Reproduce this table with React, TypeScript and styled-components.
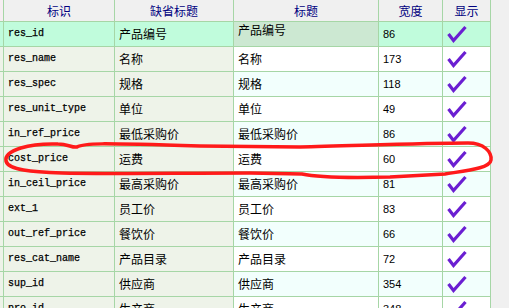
import React from "react";
import styled, { createGlobalStyle } from "styled-components";

const Global = createGlobalStyle`
  html, body { margin: 0; padding: 0; background: #f0f0f0; }
  body { width: 509px; height: 308px; overflow: hidden; }
`;

type Tone = "key" | "plain" | "alt" | "sel" | "edit" | "head" | "lead";

const bg: Record<Tone, string> = {
  key: "#eef3e9",
  plain: "#ffffff",
  alt: "#f2fffd",
  sel: "#c0fcdc",
  edit: "#cce8d2",
  head: "#f0f0f0",
  lead: "#f6eef2",
};

const Page = styled.div`
  position: relative;
  width: 509px;
  height: 308px;
  overflow: hidden;
`;

const Grid = styled.div`
  display: grid;
  grid-template-columns: 3px 110px 118px 144px 63px 47px;
  grid-template-rows: 21px;
  grid-auto-rows: 24px;
  gap: 1px;
  width: 490px;
  padding-right: 1px;
  background: #a6d6a6;
`;

const Cell = styled.div<{ $tone: Tone; $kind?: "mono" | "cjk" | "num" }>`
  background: ${(p) => bg[p.$tone]};
  display: flex;
  align-items: ${(p) => (p.$tone === "edit" ? "flex-start" : "center")};
  padding-left: 4px;
  overflow: hidden;
  white-space: nowrap;
  color: #000;
  font-family: ${(p) =>
    p.$kind === "mono"
      ? '"Liberation Mono", "DejaVu Sans Mono", monospace'
      : p.$kind === "num"
      ? '"Liberation Sans", Arial, sans-serif'
      : '"Noto Sans CJK SC", "Liberation Sans", sans-serif'};
  font-size: ${(p) => (p.$kind === "mono" ? "10px" : p.$kind === "num" ? "11px" : "12px")};
  font-weight: 400;
  -webkit-text-stroke: ${(p) => (p.$kind === "mono" ? "0.25px #000" : "0")};
  line-height: 16px;
`;

const Lead = styled.div<{ $tone: Tone }>`
  background: ${(p) => bg[p.$tone]};
`;

const Head = styled.div`
  background: #f0f0f0;
  color: #000080;
  display: flex;
  align-items: center;
  justify-content: center;
  font-family: "Noto Sans CJK SC", "Liberation Sans", sans-serif;
  font-size: 12px;
  line-height: 16px;
`;

const Check = () => (
  <svg width="20" height="18" viewBox="0 0 20 18">
    <path d="M1.5 9 L6.5 15.5 L18.5 2" fill="none" stroke="#6a1fd2" strokeWidth="3.2" strokeLinejoin="miter" />
  </svg>
);

const Annotation = styled.svg`
  position: absolute;
  left: 0;
  top: 0;
  pointer-events: none;
`;

const rows: [string, string, string][] = [
  ["res_id", "产品编号", "86"],
  ["res_name", "名称", "173"],
  ["res_spec", "规格", "118"],
  ["res_unit_type", "单位", "49"],
  ["in_ref_price", "最低采购价", "86"],
  ["cost_price", "运费", "60"],
  ["in_ceil_price", "最高采购价", "81"],
  ["ext_1", "员工价", "83"],
  ["out_ref_price", "餐饮价", "66"],
  ["res_cat_name", "产品目录", "72"],
  ["sup_id", "供应商", "354"],
  ["pro_id", "生产商", "348"],
];

export default function App() {
  return (
    <Page>
      <Global />
      <Grid>
        <Lead $tone="lead" />
        <Head>标识</Head>
        <Head>缺省标题</Head>
        <Head>标题</Head>
        <Head>宽度</Head>
        <Head>显示</Head>
        {rows.map(([id, title, w], i) => {
          const sel = i === 0;
          const right: Tone = sel ? "sel" : i % 2 === 0 ? "alt" : "plain";
          const left: Tone = sel ? "sel" : "key";
          return (
            <React.Fragment key={id}>
              <Lead $tone={left} />
              <Cell $tone={left} $kind="mono">{id}</Cell>
              <Cell $tone={left} $kind="cjk">{title}</Cell>
              <Cell $tone={sel ? "edit" : right} $kind="cjk">{title}</Cell>
              <Cell $tone={right} $kind="num">{w}</Cell>
              <Cell $tone={right}>
                <Check />
              </Cell>
            </React.Fragment>
          );
        })}
      </Grid>
      <Annotation width="509" height="308" viewBox="0 0 509 308">
        <path
          d="M 6 161 C 4 150, 30 143, 58 144 C 68 144, 72 148, 77 147 C 84 143, 96 143, 200 146 L 300 147 C 350 146, 420 143, 468 143 C 484 143, 492 152, 491 160 C 490 168, 470 170, 445 174 L 390 177 C 350 178, 320 178, 302 174 L 250 173 C 180 173, 95 174, 62 173 C 32 172, 8 170, 6 161 Z"
          fill="none"
          stroke="#ff1a1a"
          strokeWidth="3.5"
        />
      </Annotation>
    </Page>
  );
}
